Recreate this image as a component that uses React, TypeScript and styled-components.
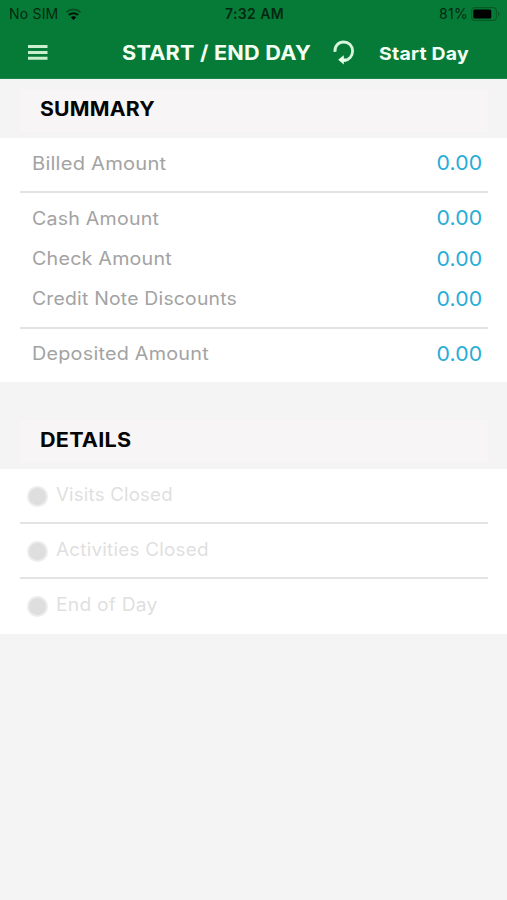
import React from "react";
import styled, { createGlobalStyle } from "styled-components";

const Global = createGlobalStyle`
  * { box-sizing: border-box; }
  body { margin: 0; background: #f4f4f4; font-family: Inter, sans-serif; }
`;

const Screen = styled.main`
  width: 507px;
  height: 900px;
  overflow: hidden;
  background: #f4f4f4;
`;

const TopArea = styled.header`
  height: 79px;
  background: #067b38;
  border-bottom: 1px solid #1c8549;
`;

const StatusBar = styled.div`
  display: grid;
  grid-template-columns: 1fr auto 1fr;
  align-items: center;
  height: 28px;
  padding: 0 7px 0 9px;
  font-size: 14px;
  line-height: 28px;
  color: #04280f;
`;

const Carrier = styled.div`
  display: flex;
  align-items: center;
  gap: 7px;
  letter-spacing: 0.2px;
`;

const Clock = styled.div`
  font-weight: 600;
  letter-spacing: 0.4px;
`;

const Battery = styled.div`
  display: flex;
  justify-content: flex-end;
  align-items: center;
  gap: 3px;
  letter-spacing: 0.3px;
`;

const NavBar = styled.nav`
  display: flex;
  align-items: center;
  height: 50px;
  padding-left: 27px;
  color: #f4fff4;
`;

const Wide = styled.span<{ $stretch: number; $fromRight?: boolean }>`
  display: inline-block;
  white-space: nowrap;
  letter-spacing: 0.2px;
  transform: scaleX(${(p) => p.$stretch});
  transform-origin: ${(p) => (p.$fromRight ? "right" : "left")} center;
`;

const Title = styled.h1`
  width: 190px;
  margin: 0 21px 0 74px;
  font-size: 20px;
  line-height: 30px;
  font-weight: 700;
`;

const StartButton = styled.button`
  margin: 1px 0 0 24px;
  padding: 0;
  border: 0;
  background: none;
  color: inherit;
  font: 700 18px/28px Inter, sans-serif;
`;

const SectionHead = styled.div<{ $top: number }>`
  padding: ${(p) => p.$top}px 19px 6px 20px;
`;

const SectionTitle = styled.h2`
  margin: 0;
  padding-left: 20px;
  height: 43px;
  background: #f7f5f6;
  color: #050505;
  font-size: 20px;
  font-weight: 700;
  line-height: 41px;
`;

const Panel = styled.section`
  padding: 0 19px 0 20px;
  background: #fff;
`;

const Group = styled.div<{ $last?: boolean }>`
  padding: 5px 6px ${(p) => (p.$last ? 8.3 : 7.5)}px 11.5px;
  border-bottom: ${(p) => (p.$last ? "0" : "2px solid #e3e3e3")};
`;

const AmountRow = styled.div`
  display: flex;
  justify-content: space-between;
  align-items: center;
  height: 40.4px;
`;

const Label = styled(Wide)`
  color: #a3a3a3;
  font-size: 18px;
`;

const Amount = styled(Wide)`
  margin-top: -0.6px;
  color: #27add6;
  font-size: 20.5px;
`;

const StepRow = styled.div<{ $last?: boolean }>`
  display: flex;
  align-items: center;
  height: 55px;
  padding: 0 0 ${(p) => (p.$last ? 4 : 2)}px 7px;
  border-bottom: ${(p) => (p.$last ? "0" : "2px solid #e3e3e3")};
`;

const Dot = styled.span`
  width: 21px;
  height: 21px;
  margin: 4px 8px 0 0;
  border: 2px solid #ececec;
  border-radius: 50%;
  background: #dedede;
`;

const StepLabel = styled(Label)`
  color: #dfdfdf;
`;

const groups = [
  [{ name: "Billed Amount", stretch: 1.118 }],
  [
    { name: "Cash Amount", stretch: 1.088 },
    { name: "Check Amount", stretch: 1.093 },
    { name: "Credit Note Discounts", stretch: 1.075 },
  ],
  [{ name: "Deposited Amount", stretch: 1.1 }],
];

const steps = [
  { name: "Visits Closed", stretch: 1.035 },
  { name: "Activities Closed", stretch: 1.05 },
  { name: "End of Day", stretch: 1.07 },
];

const WifiIcon = () => (
  <svg width="17" height="13" viewBox="0 0 17 13" fill="none">
    <path d="M1.5 4.3C5.5 .7 11.5 .7 15.5 4.3" stroke="#07501f" strokeWidth="2" />
    <path d="M3.8 7C6.5 4.7 10.5 4.7 13.2 7" stroke="#001b07" strokeWidth="2.2" />
    <path d="M5.8 9.2C7.3 8 9.7 8 11.2 9.2L8.5 12Z" fill="#000" />
  </svg>
);

const BatteryIcon = () => (
  <svg width="29" height="14" viewBox="0 0 29 14" fill="none">
    <rect x=".6" y=".6" width="24.8" height="12.8" rx="3.5" stroke="#075c25" strokeWidth="1.2" />
    <rect x="2.3" y="2.5" width="18" height="9" rx="1.5" fill="#000" />
    <path d="M27 4.5c2 .8 2 4.2 0 5Z" fill="#075c25" />
  </svg>
);

const MenuIcon = () => (
  <svg width="21" height="16" viewBox="0 0 21 16">
    <path d="M1 1.5h19.5M1 7.5h19.5M1 13.2h19.5" stroke="#c9efcf" strokeWidth="3" />
  </svg>
);

const RefreshIcon = () => (
  <svg width="22" height="26" viewBox="0 0 22 26" fill="none">
    <path d="M2 11.8C1.4 6 5.4 2 10.7 2c5 0 8.9 3.9 8.9 9 0 4.8-3.3 8.8-8.1 9.6" stroke="#d6f5da" strokeWidth="2.8" />
    <path d="M5.2 19.8l5.6-4.6v3.4h2v3.2h-2v2.8Z" fill="#e7ffe8" />
  </svg>
);

export default function App() {
  return (
    <>
      <Global />
      <Screen>
        <TopArea>
          <StatusBar>
            <Carrier>No SIM <WifiIcon /></Carrier>
            <Clock>7:32 AM</Clock>
            <Battery>81% <BatteryIcon /></Battery>
          </StatusBar>
          <NavBar>
            <MenuIcon />
            <Title><Wide $stretch={1.083}>START / END DAY</Wide></Title>
            <RefreshIcon />
            <StartButton><Wide $stretch={1.08}>Start Day</Wide></StartButton>
          </NavBar>
        </TopArea>
        <SectionHead $top={10}>
          <SectionTitle><Wide $stretch={1.06}>SUMMARY</Wide></SectionTitle>
        </SectionHead>
        <Panel>
          {groups.map((rows, i) => (
            <Group key={rows[0].name} $last={i === groups.length - 1}>
              {rows.map((row) => (
                <AmountRow key={row.name}>
                  <Label $stretch={row.stretch}>{row.name}</Label>
                  <Amount $stretch={1.035} $fromRight>0.00</Amount>
                </AmountRow>
              ))}
            </Group>
          ))}
        </Panel>
        <SectionHead $top={38}>
          <SectionTitle><Wide $stretch={1.08}>DETAILS</Wide></SectionTitle>
        </SectionHead>
        <Panel>
          {steps.map((step, i) => (
            <StepRow key={step.name} $last={i === steps.length - 1}>
              <Dot />
              <StepLabel $stretch={step.stretch}>{step.name}</StepLabel>
            </StepRow>
          ))}
        </Panel>
      </Screen>
    </>
  );
}
